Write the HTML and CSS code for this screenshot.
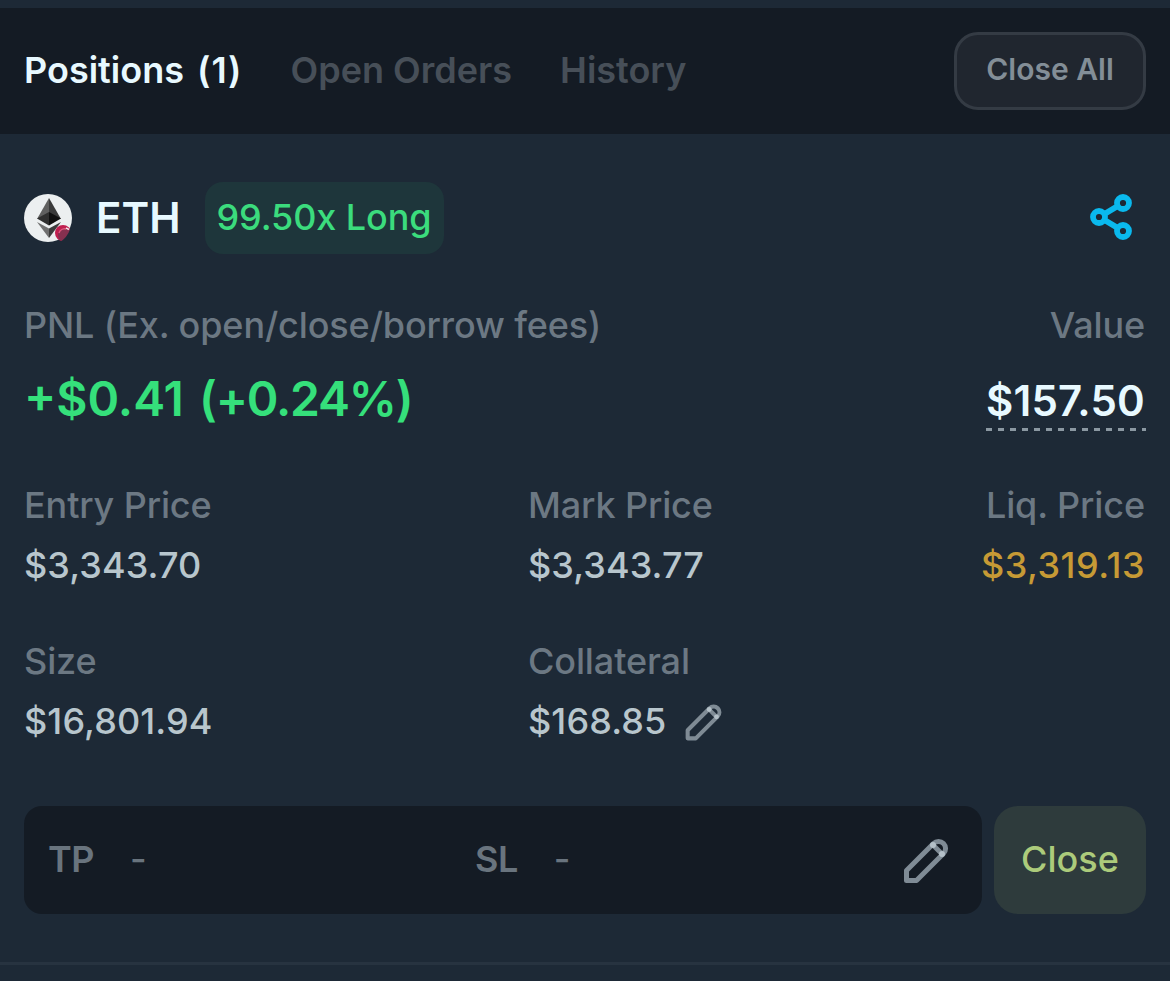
FILE: index.html
```html
<!DOCTYPE html>
<html lang="en">
<head>
<meta charset="UTF-8">
<meta name="viewport" content="width=device-width, initial-scale=1.0">
<title>Positions</title>
<link rel="stylesheet" href="styles.css">
</head>
<body>

<div class="header">
    <div class="tabs">
        <div class="tab active">Positions <span class="count">(1)</span></div>
        <div class="tab">Open Orders</div>
        <div class="tab">History</div>
    </div>
    <button class="close-all-button">Close All</button>
</div>

<div class="position">
    <div class="position-header">
        <svg class="token-icon" viewBox="0 0 48 48">
            <defs>
                <clipPath id="coin"><circle cx="24" cy="24" r="24"/></clipPath>
            </defs>
            <g clip-path="url(#coin)">
                <rect width="48" height="48" fill="#eceff0"/>
                <path d="M25 4 13 25l12-5.500z" fill="#606060"/>
                <path d="M25 4v15.500L37 25z" fill="#3a3a3a"/>
                <path d="M25 18 13 24.500l12 7z" fill="#303030"/>
                <path d="M25 18 37 24.500l-12 7z" fill="#101010"/>
                <path d="M13 28l12 6.500v9.500z" fill="#707070"/>
                <path d="M37 28l-12 6.500v9.500z" fill="#3c3c3c"/>
            </g>
            <circle cx="39" cy="39" r="8" fill="#c01f4f"/>
            <circle cx="41" cy="41" r="7" fill="#85304f"/>
            <path d="M35 39a6 6 0 0 1 7-4" fill="none" stroke="#e0567c" stroke-width="1.500"/>
            <path d="M42 34l3 1.500" stroke="#f5dfe6" stroke-width="1.500"/>
            <path d="M48 34.500V48H36a24 24 0 0 0 10-12.500z" fill="#1d2936"/>
        </svg>
        <span class="token-name">ETH</span>
        <span class="leverage">99.50x Long</span>
        <svg class="share-icon" viewBox="0 0 48 48" fill="none" stroke="#0ab9ee" stroke-width="5.800">
            <circle cx="35" cy="9" r="6"/>
            <circle cx="11" cy="23" r="6"/>
            <circle cx="35" cy="37" r="6"/>
            <path d="M16.500 20 29.800 12M16.500 26 29.800 34"/>
        </svg>
    </div>

    <div class="summary">
        <div class="stat">
            <span class="label">PNL (Ex. open/close/borrow fees)</span>
            <span class="pnl">+$0.41 <span class="percent">(+0.24%)</span></span>
        </div>
        <div class="stat right">
            <span class="label">Value</span>
            <span class="total">$157.50</span>
        </div>
    </div>

    <div class="stats">
        <div class="stat">
            <span class="label">Entry Price</span>
            <span class="value">$3,343.70</span>
        </div>
        <div class="stat">
            <span class="label">Mark Price</span>
            <span class="value">$3,343.77</span>
        </div>
        <div class="stat right">
            <span class="label">Liq. Price</span>
            <span class="value warning">$3,319.13</span>
        </div>
        <div class="stat">
            <span class="label">Size</span>
            <span class="value">$16,801.94</span>
        </div>
        <div class="stat">
            <span class="label">Collateral</span>
            <span class="value">$168.85
                <svg class="edit-icon" viewBox="0 0 48 48">
                    <path d="M4.500 43.500v-10L31.500 6.500a7 7 0 0 1 10 10L14.500 43.500z"/>
                    <path d="M30.500 7.500l10 10"/>
                    <circle cx="31" cy="8" r="3"/>
                    <circle cx="40" cy="17" r="3"/>
                </svg>
            </span>
        </div>
    </div>

    <div class="actions">
        <div class="tpsl">
            <div class="trigger"><span class="trigger-name">TP</span><span>-</span></div>
            <div class="trigger"><span class="trigger-name">SL</span><span>-</span></div>
            <svg class="edit-icon large" viewBox="0 0 48 48">
                <path d="M4.500 43.500v-10L31.500 6.500a7 7 0 0 1 10 10L14.500 43.500z"/>
                <path d="M30.500 7.500l10 10"/>
                <circle cx="31" cy="8" r="3"/>
                <circle cx="40" cy="17" r="3"/>
            </svg>
        </div>
        <button class="close-button">Close</button>
    </div>
</div>

</body>
</html>
```
FILE: styles.css
```css
* {
    box-sizing: border-box;
}
body {
    font-family: Inter, sans-serif;
    font-size: 36px;
    background-color: #1d2936;
    color: #e8f9ff;
    margin: 0;
    padding-top: 8px;
    height: 981px;
    overflow: hidden;
}
button {
    font-family: inherit;
    padding: 0;
}
.header {
    display: flex;
    justify-content: space-between;
    align-items: flex-start;
    background-color: #141b24;
    height: 126px;
    padding: 24px 24px 0;
}
.tabs {
    display: flex;
    gap: 48px;
    line-height: 76px;
    font-weight: 600;
    white-space: nowrap;
}
.tab {
    color: #474f58;
}
.tab.active {
    color: #e8f9ff;
    word-spacing: 4px;
}
.count {
    letter-spacing: 1px;
}
.close-all-button {
    width: 192px;
    height: 78px;
    padding-bottom: 4px;
    background-color: #20262f;
    border: 3px solid #343b44;
    border-radius: 24px;
    color: #838e97;
    font-size: 30px;
    font-weight: 600;
}
.position {
    height: 831px;
    padding: 48px 24px 0;
    border-bottom: 3px solid #273340;
}
.position-header {
    display: flex;
    align-items: center;
    height: 72px;
}
.token-icon {
    width: 48px;
    height: 48px;
}
.token-name {
    margin: 0 24px;
    padding-bottom: 2px;
    font-size: 42px;
    font-weight: 600;
}
.leverage {
    width: 239px;
    height: 72px;
    margin-left: 1px;
    padding-left: 11px;
    line-height: 71px;
    letter-spacing: -0.1px;
    font-weight: 450;
    background-color: #1e363b;
    border-radius: 18px;
    color: #3bdc7d;
}
.share-icon {
    width: 48px;
    height: 48px;
    margin-left: auto;
    margin-right: 10px;
}
.summary {
    display: flex;
    justify-content: space-between;
    height: 180px;
    padding-top: 48px;
}
.stat {
    display: flex;
    flex-direction: column;
    align-items: flex-start;
    white-space: nowrap;
}
.stat.right {
    align-items: flex-end;
}
.label {
    line-height: 46px;
    height: 48px;
    letter-spacing: -0.12px;
    font-weight: 450;
    color: #6c7883;
}
.stat.right .label,
.value.warning {
    padding-right: 1px;
}
.pnl {
    margin-top: 19px;
    line-height: 60px;
    font-size: 48px;
    font-weight: 600;
    word-spacing: 3px;
    color: #35e07b;
}
.percent {
    letter-spacing: -1.2px;
}
.total {
    width: 160px;
    height: 54px;
    margin-top: 27px;
    line-height: 48px;
    letter-spacing: 0.2px;
    font-size: 42px;
    font-weight: 600;
    background: repeating-linear-gradient(90deg, #8b98a2 0 6px, transparent 6px 12px) left bottom / 100% 3px no-repeat;
}
.stats {
    display: grid;
    grid-template-columns: 504px 1fr auto;
    row-gap: 48px;
    padding-top: 48px;
}
.value {
    display: flex;
    align-items: center;
    height: 48px;
    margin-top: 12px;
    padding-bottom: 2px;
    line-height: 46px;
    letter-spacing: 0.1px;
    font-weight: 450;
    color: #b8c6cd;
}
.value.warning {
    letter-spacing: 0.5px;
    color: #c69a35;
}
.edit-icon {
    width: 39px;
    height: 39px;
    margin-top: 2px;
    margin-left: 18px;
    fill: none;
    stroke: #7f8b95;
    stroke-width: 5;
    stroke-linejoin: round;
}
.edit-icon circle {
    fill: #b4c0c8;
    stroke: none;
}
.edit-icon.large {
    width: 48px;
    height: 48px;
    margin-left: 0;
}
.actions {
    display: flex;
    gap: 12px;
    margin-top: 60px;
}
.tpsl {
    display: flex;
    align-items: center;
    width: 958px;
    height: 108px;
    padding: 0 32px 0 24px;
    background-color: #141b24;
    border-radius: 18px;
    color: #69747e;
    font-weight: 500;
}
.trigger {
    display: flex;
    flex: 1;
    gap: 36px;
    padding-bottom: 2px;
}
.trigger-name {
    font-weight: 600;
    letter-spacing: -0.5px;
}
.close-button {
    width: 152px;
    height: 108px;
    padding-bottom: 2px;
    background-color: #2e3b3c;
    border: none;
    border-radius: 24px;
    color: #accb7b;
    font-size: 36px;
    font-weight: 450;
}
```
